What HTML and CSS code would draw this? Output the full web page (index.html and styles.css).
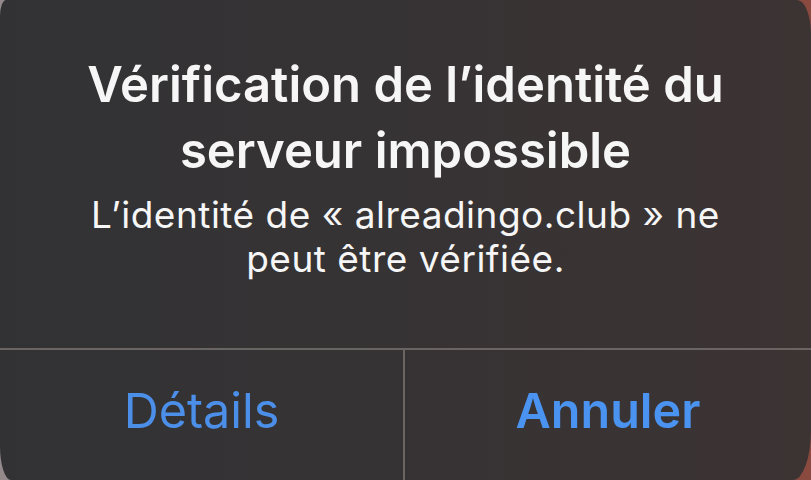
FILE: index.html
```html
<!DOCTYPE html>
<html lang="fr">
<head>
    <meta charset="UTF-8">
    <meta name="viewport" content="width=device-width, initial-scale=1.0">
    <title>Vérification de l’identité du serveur impossible</title>
    <link rel="stylesheet" href="styles.css">
</head>
<body>
    <div class="alert">
        <div class="alert-body">
            <h1 class="alert-title">Vérification de l’identité du serveur impossible</h1>
            <p class="alert-message">L’identité de «&nbsp;alreadingo.club&nbsp;» ne peut être vérifiée.</p>
        </div>
        <div class="alert-actions">
            <div class="alert-button" role="button">Détails</div>
            <div class="alert-button alert-button-cancel" role="button">Annuler</div>
        </div>
    </div>
</body>
</html>
```
FILE: styles.css
```css
html, body {
    height: 100%;
}

body {
    margin: 0;
    overflow: hidden;
    font-family: Inter, "Noto Sans", sans-serif;
    background: linear-gradient(90deg, #948a8c 0%, #7a7274 40%, #7e463d 80%, #8a4a3f 100%);
}

.alert {
    display: flex;
    flex-direction: column;
    height: 480px;
    border-radius: 6px 14px 18px 11px / 16px 34px 50px 34px;
    background: linear-gradient(90deg, #323234 0%, #363334 45%, #3c3333 100%);
    color: #f6f6f6;
    text-align: center;
}

.alert-body {
    height: 348px;
    box-sizing: border-box;
    padding: 52px 60px 0;
}

.alert-title {
    margin: 0;
    font-size: 49px;
    font-weight: 600;
    line-height: 66px;
}

.alert-message {
    margin: 9px 0 0;
    font-size: 37px;
    font-weight: 400;
    line-height: 44px;
    letter-spacing: 0.5px;
}

.alert-actions {
    flex: 1;
    display: grid;
    grid-template-columns: 403px 1fr;
    border-top: 2px solid #6a6563;
}

.alert-button {
    padding-top: 33px;
    font-size: 48.5px;
    font-weight: 400;
    line-height: 56px;
    color: #4b8fe9;
    cursor: pointer;
}

.alert-button-cancel {
    font-weight: 600;
    color: #4a93f0;
    border-left: 2px solid #6a6563;
}
```
